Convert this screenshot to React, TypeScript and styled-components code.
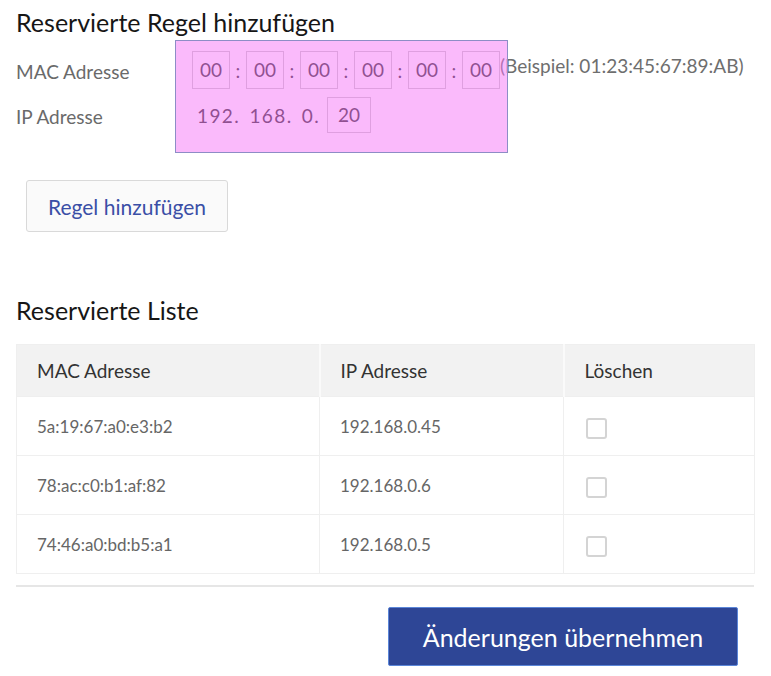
import styled, { createGlobalStyle } from "styled-components";

const GlobalStyle = createGlobalStyle`
  body {
    margin: 0;
    background: #ffffff;
    font-family: Lato, "Open Sans", sans-serif;
  }
`;

const Page = styled.div`
  padding: 0 17px 20px 16px;
  display: flex;
  flex-direction: column;
`;

const Heading = styled.h2`
  margin: 7px 0 0;
  font-size: 25px;
  font-weight: 400;
  line-height: 30px;
  color: #161616;
`;

const FormArea = styled.div`
  display: flex;
  align-items: flex-start;
  margin-top: 3px;
`;

const LabelCol = styled.div`
  width: 159px;
  padding-top: 13px;
  display: flex;
  flex-direction: column;
  gap: 8px;
`;

const Label = styled.div`
  height: 37px;
  line-height: 37px;
  font-size: 19px;
  color: #6a6a6a;
`;

const InputArea = styled.div`
  position: relative;
  padding: 11px 8px 20px 17px;
  margin-right: -8px;
  display: flex;
  flex-direction: column;
  gap: 8px;

  &::after {
    content: "";
    position: absolute;
    inset: 0;
    background: rgba(245, 118, 247, 0.5);
    border: 1px solid #8d8dc6;
    pointer-events: none;
  }
`;

const FieldRow = styled.div`
  display: flex;
  align-items: center;
`;

const OctetBox = styled.div<{ $w: number; $h: number }>`
  box-sizing: border-box;
  width: ${(p) => p.$w}px;
  height: ${(p) => p.$h}px;
  border: 1px solid #c8c8c8;
  background: #ffffff;
  display: flex;
  align-items: center;
  justify-content: center;
  padding-bottom: 2px;
  font-size: 19px;
  color: #2a2a2a;
`;

const Colon = styled.span`
  width: 16px;
  text-align: center;
  font-size: 19px;
  color: #2a2a2a;
`;

const IpFixed = styled.span`
  padding-left: 5px;
  font-size: 19px;
  letter-spacing: 1.4px;
  color: #2a2a2a;
  word-spacing: 3px;
  margin-right: 7px;
`;

const Example = styled.div`
  margin-top: 14px;
  font-size: 19px;
  color: #6e6e6e;
`;

const SecondaryButton = styled.button`
  align-self: flex-start;
  margin: 27px 0 0 10px;
  width: 202px;
  height: 52px;
  background: #fafafa;
  border: 1px solid #d9d9d9;
  border-radius: 3px;
  font-family: Lato, "Open Sans", sans-serif;
  font-size: 21px;
  color: #3a4fa6;
  cursor: pointer;
`;

const SubHeading = styled(Heading)`
  margin-top: 63px;
`;

const Table = styled.table`
  margin-top: 19px;
  width: 738px;
  border-collapse: collapse;
  table-layout: fixed;
  border: 1px solid #efefef;
`;

const HeadCell = styled.th<{ $w: number }>`
  box-sizing: border-box;
  width: ${(p) => p.$w}px;
  height: 52px;
  padding: 0 0 0 20px;
  background: #f2f2f2;
  border-left: 2px solid #fafafa;
  text-align: left;
  font-weight: 400;
  font-size: 19px;
  color: #333333;
  &:first-child {
    border-left: none;
  }
`;

const Cell = styled.td`
  height: 58px;
  padding: 0 0 0 20px;
  border: 1px solid #efefef;
  font-size: 17px;
  color: #666666;
`;

const Check = styled.input`
  appearance: none;
  margin: 4px 0 0 2px;
  width: 21px;
  height: 21px;
  border: 2px solid #d4d4d4;
  border-radius: 3px;
  background: #ffffff;
  display: block;
`;

const Divider = styled.div`
  margin-top: 11px;
  height: 2px;
  background: #e6e6e6;
`;

const PrimaryButton = styled.button`
  align-self: flex-end;
  margin: 20px 16px 0 0;
  width: 350px;
  height: 59px;
  background: #2e4696;
  border: 1px solid #5b86d8;
  border-radius: 2px;
  font-family: Lato, "Open Sans", sans-serif;
  font-size: 25px;
  color: #ffffff;
  cursor: pointer;
`;

const rows = [
  { mac: "5a:19:67:a0:e3:b2", ip: "192.168.0.45" },
  { mac: "78:ac:c0:b1:af:82", ip: "192.168.0.6" },
  { mac: "74:46:a0:bd:b5:a1", ip: "192.168.0.5" },
];

export default function App() {
  const octets = ["00", "00", "00", "00", "00", "00"];
  return (
    <Page>
      <GlobalStyle />
      <Heading>Reservierte Regel hinzufügen</Heading>
      <FormArea>
        <LabelCol>
          <Label>MAC Adresse</Label>
          <Label>IP Adresse</Label>
        </LabelCol>
        <InputArea>
          <FieldRow>
            {octets.map((o, i) => (
              <FieldRow key={i}>
                <OctetBox $w={38} $h={38}>
                  {o}
                </OctetBox>
                {i < octets.length - 1 && <Colon>:</Colon>}
              </FieldRow>
            ))}
          </FieldRow>
          <FieldRow>
            <IpFixed>192. 168. 0.</IpFixed>
            <OctetBox $w={44} $h={36}>
              20
            </OctetBox>
          </FieldRow>
        </InputArea>
        <Example>(Beispiel: 01:23:45:67:89:AB)</Example>
      </FormArea>
      <SecondaryButton>Regel hinzufügen</SecondaryButton>
      <SubHeading>Reservierte Liste</SubHeading>
      <Table>
        <thead>
          <tr>
            <HeadCell $w={303}>MAC Adresse</HeadCell>
            <HeadCell $w={244}>IP Adresse</HeadCell>
            <HeadCell $w={191}>Löschen</HeadCell>
          </tr>
        </thead>
        <tbody>
          {rows.map((r) => (
            <tr key={r.mac}>
              <Cell>{r.mac}</Cell>
              <Cell>{r.ip}</Cell>
              <Cell>
                <Check type="checkbox" />
              </Cell>
            </tr>
          ))}
        </tbody>
      </Table>
      <Divider />
      <PrimaryButton>Änderungen übernehmen</PrimaryButton>
    </Page>
  );
}
